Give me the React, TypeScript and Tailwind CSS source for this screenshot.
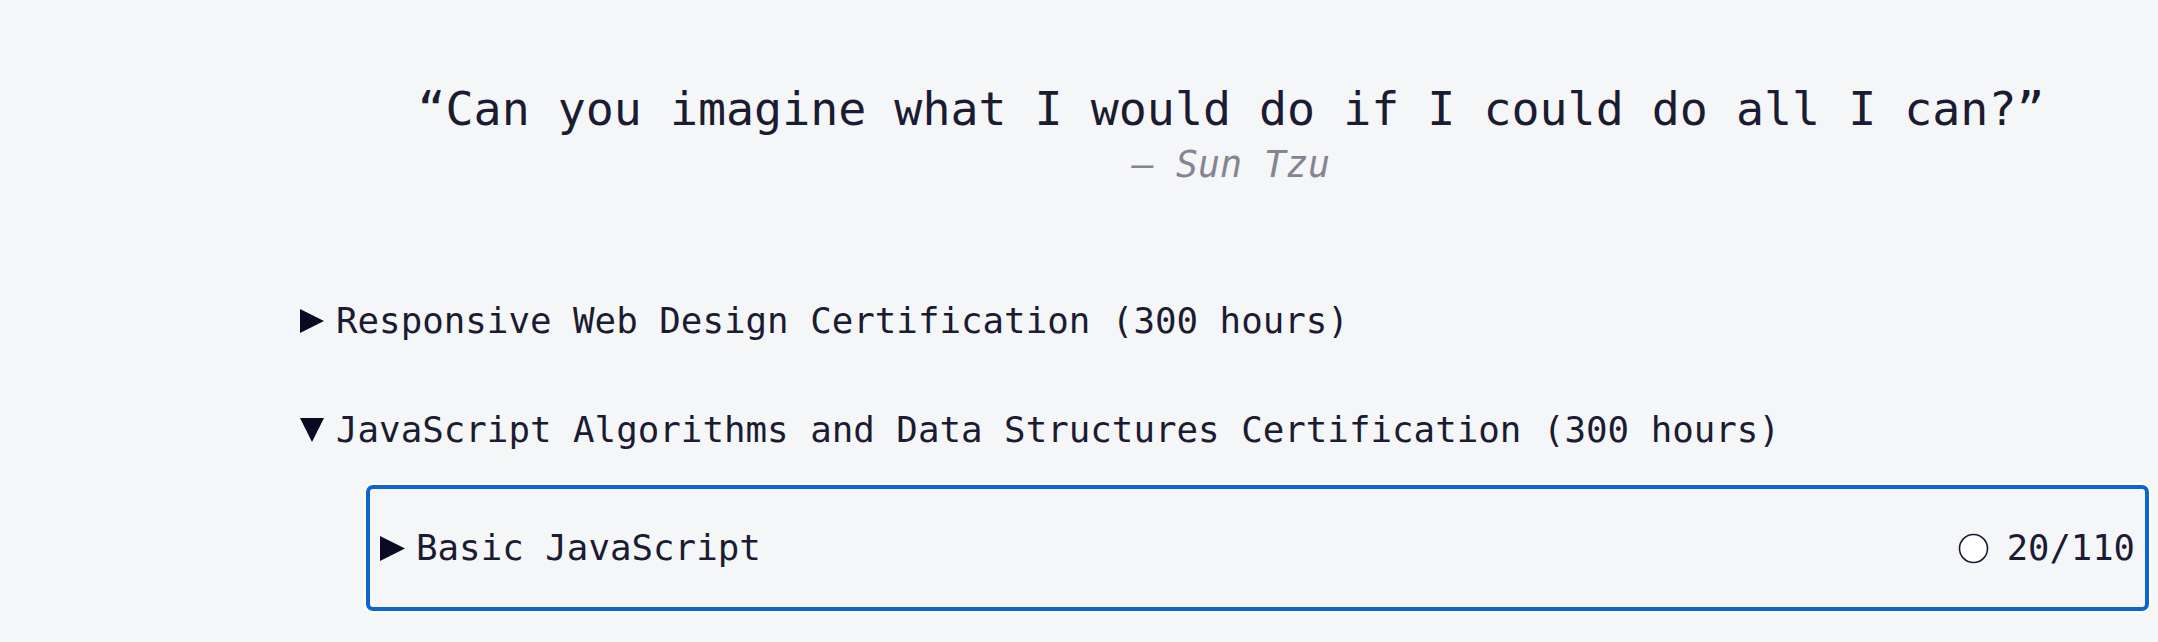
import type { ReactNode } from "react"

const mono = "font-['DejaVu_Sans_Mono','Liberation_Mono',monospace]"

function Caret({ open = false, size = 24 }: { open?: boolean; size?: number }) {
  return (
    <svg width={size} height={size} viewBox="0 0 24 24" className="shrink-0 fill-[#0a0a23]">
      {open ? <polygon points="0,0 24,0 12,24" /> : <polygon points="0,0 24,12 0,24" />}
    </svg>
  )
}

function Section({ open, children }: { open?: boolean; children: ReactNode }) {
  return (
    <div className="flex h-[44px] items-center gap-[12px]">
      <Caret open={open} />
      <span className="text-[35.8px] leading-[44px] text-[#1b1b32]">{children}</span>
    </div>
  )
}

export default function App() {
  return (
    <div className={`min-h-screen w-full overflow-hidden bg-[#f5f6f7] ${mono}`}>
      {/* Quote */}
      <div className="pt-[81px] pl-[304px] text-center">
        <p className="text-[46.6px] leading-[56px] text-[#1b1b32]">
          “Can you imagine what I would do if I could do all I can?”
        </p>
        <p className="mt-[6px] text-[36.5px] italic leading-[44px] text-[#858591]">— Sun Tzu</p>
      </div>

      {/* Curriculum */}
      <div className="mt-[112px] pl-[300px] pr-[9px]">
        <Section>Responsive Web Design Certification (300 hours)</Section>
        <div className="mt-[65px]">
          <Section open>JavaScript Algorithms and Data Structures Certification (300 hours)</Section>
        </div>
        <div className="mt-[33px] ml-[66px] flex items-center justify-between rounded-[7px] border-[4px] border-[#0e64d0] py-[37px] pl-[10px] pr-[10px] shadow-[0_0_0_2px_#ffffff]">
          <div className="flex items-center gap-[11px]">
            <Caret size={25} />
            <span className="text-[35.8px] leading-[44px] text-[#1b1b32]">Basic JavaScript</span>
          </div>
          <div className="flex items-center gap-[18px]">
            <svg width="31" height="31" viewBox="0 0 31 31">
              <circle cx="15.5" cy="15.5" r="14" fill="#ffffff" stroke="#1b1b32" strokeWidth="1.6" />
            </svg>
            <span className="text-[35.5px] leading-[44px] text-[#1b1b32]">20/110</span>
          </div>
        </div>
      </div>
    </div>
  )
}
